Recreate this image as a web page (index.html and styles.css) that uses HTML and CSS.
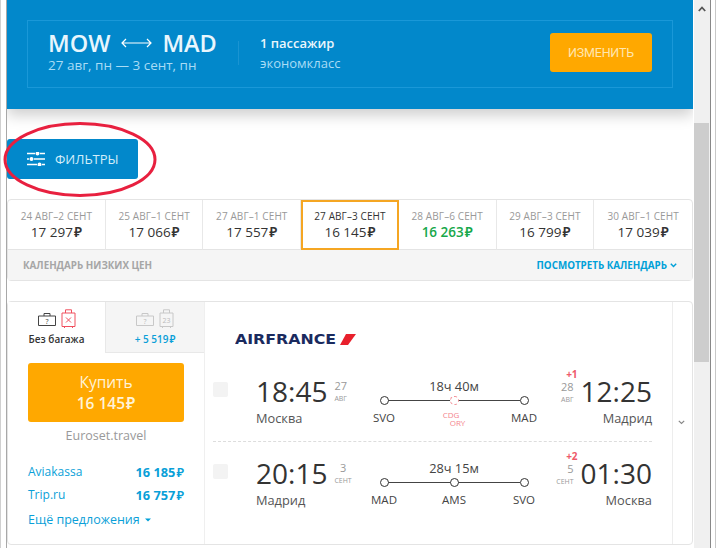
FILE: index.html
```html
<!DOCTYPE html>
<html lang="ru">
<head>
<meta charset="utf-8">
<title>MOW — MAD</title>
<link rel="stylesheet" href="styles.css">
</head>
<body>
<div class="window">
  <main class="page">
    <header class="summary">
      <div class="summary-box">
        <div class="route-info">
          <div class="route-title"><span>MOW</span>
            <svg class="route-arrow" width="31" height="10" viewBox="0 0 31 10"><path d="M1 5h29M5 1 1 5l4 4M26 1l4 4-4 4" fill="none" stroke="#fff" stroke-width="1.200"/></svg>
            <span>MAD</span></div>
          <div class="route-dates">27 авг, пн — 3 сент, пн</div>
        </div>
        <div class="pax-info">
          <div class="pax-count">1 пассажир</div>
          <div class="pax-class">экономкласс</div>
        </div>
        <button class="change-btn">ИЗМЕНИТЬ</button>
      </div>
    </header>

    <div class="filters-row">
      <button class="filters-btn">
        <svg width="18" height="14" viewBox="0 0 18 14"><g stroke="#fff" stroke-width="1.400" fill="#fff"><path d="M0 1.500h8M13 1.500h5M0 7h2M7 7h11M0 12.500h10M15 12.500h3" fill="none"/><circle cx="10.500" cy="1.500" r="1.300"/><circle cx="4.500" cy="7" r="1.300"/><circle cx="12.500" cy="12.500" r="1.300"/></g></svg>
        <span>ФИЛЬТРЫ</span>
      </button>
    </div>

    <section class="calendar">
      <div class="cal-cells">
        <div class="cal-cell"><div class="cal-date">24 АВГ–2 СЕНТ</div><div class="cal-price">17 297<span class="rub">₽</span></div></div>
        <div class="cal-cell"><div class="cal-date">25 АВГ–1 СЕНТ</div><div class="cal-price">17 066<span class="rub">₽</span></div></div>
        <div class="cal-cell"><div class="cal-date">27 АВГ–1 СЕНТ</div><div class="cal-price">17 557<span class="rub">₽</span></div></div>
        <div class="cal-cell selected"><div class="cal-date">27 АВГ–3 СЕНТ</div><div class="cal-price">16 145<span class="rub">₽</span></div></div>
        <div class="cal-cell"><div class="cal-date">28 АВГ–6 СЕНТ</div><div class="cal-price cheap">16 263<span class="rub">₽</span></div></div>
        <div class="cal-cell"><div class="cal-date">29 АВГ–3 СЕНТ</div><div class="cal-price">16 799<span class="rub">₽</span></div></div>
        <div class="cal-cell"><div class="cal-date">30 АВГ–1 СЕНТ</div><div class="cal-price">17 039<span class="rub">₽</span></div></div>
      </div>
      <div class="cal-bar">
        <span class="cal-bar-title">КАЛЕНДАРЬ НИЗКИХ ЦЕН</span>
        <span class="cal-bar-link">ПОСМОТРЕТЬ КАЛЕНДАРЬ
          <svg width="7" height="5" viewBox="0 0 7 5"><path d="M.8.8 3.500 3.500 6.200.8" fill="none" stroke="#00a0d8" stroke-width="1.500"/></svg>
        </span>
      </div>
    </section>

    <section class="ticket">
      <aside class="offer">
        <div class="tabs">
          <div class="tab active">
            <div class="tab-icons">
              <svg width="18" height="13" viewBox="0 0 18 13"><path d="M.5 3h17v9.500H.5zM6 3V.5h6V3" fill="none" stroke="#444"/><text x="9" y="10.500" class="bag-mark dark">?</text></svg>
              <svg width="15" height="20" viewBox="0 0 15 20"><path d="M1 4h13v13.500H1zM4.500 4V.8h6V4M3.500 17.500V19M11.500 17.500V19M5 8.500l5 5M10 8.500l-5 5" fill="none" stroke="#f0505f"/></svg>
            </div>
            <div class="tab-label">Без багажа</div>
          </div>
          <div class="tab">
            <div class="tab-icons">
              <svg width="18" height="13" viewBox="0 0 18 13"><path d="M.5 3h17v9.500H.5zM6 3V.5h6V3" fill="none" stroke="#c8c8c8"/><text x="9" y="10.500" class="bag-mark">?</text></svg>
              <svg width="15" height="20" viewBox="0 0 15 20"><path d="M1 4h13v13.500H1zM4.500 4V.8h6V4M3.500 17.500V19M11.500 17.500V19" fill="none" stroke="#c8c8c8"/><text x="7.500" y="14" class="bag-mark">23</text></svg>
            </div>
            <div class="tab-extra">+ 5 519<span class="rub">₽</span></div>
          </div>
        </div>
        <div class="offer-body">
          <button class="buy-btn"><span>Купить</span><strong>16 145<span class="rub">₽</span></strong></button>
          <div class="seller">Euroset.travel</div>
          <ul class="other-offers">
            <li><span>Aviakassa</span><b>16 185<span class="rub">₽</span></b></li>
            <li><span>Trip.ru</span><b>16 757<span class="rub">₽</span></b></li>
          </ul>
          <div class="more-offers">Ещё предложения
            <svg width="6" height="4" viewBox="0 0 6 4"><path d="M0 .5h6L3 3.500z" fill="#00a0d8"/></svg>
          </div>
        </div>
      </aside>

      <div class="flights">
        <div class="airline">
          <span class="airline-name">AIRFRANCE</span>
          <svg width="16" height="11" viewBox="0 0 16 11"><path d="M6 0h10L8 11H0z" fill="#e8202c"/></svg>
        </div>

        <div class="flight">
          <span class="check"></span>
          <div class="side">
            <div class="time-line"><span class="time">18:45</span><div class="day"><span class="day-num">27</span><span class="day-mon">АВГ</span></div></div>
            <div class="city">Москва</div>
          </div>
          <div class="path">
            <div class="duration">18ч 40м</div>
            <div class="stops">
              <div class="stop"><i class="dot"></i><span class="code">SVO</span></div>
              <div class="stop"><i class="dot red"></i><span class="code transfer">CDG<br><em>ORY</em></span></div>
              <div class="stop"><i class="dot"></i><span class="code">MAD</span></div>
            </div>
          </div>
          <div class="side end">
            <div class="time-line"><div class="day"><span class="plus">+1</span><span class="day-num">28</span><span class="day-mon">АВГ</span></div><span class="time">12:25</span></div>
            <div class="city">Мадрид</div>
          </div>
        </div>

        <div class="flight second">
          <span class="check"></span>
          <div class="side">
            <div class="time-line"><span class="time">20:15</span><div class="day"><span class="day-num">3</span><span class="day-mon">СЕНТ</span></div></div>
            <div class="city">Мадрид</div>
          </div>
          <div class="path">
            <div class="duration">28ч 15м</div>
            <div class="stops">
              <div class="stop"><i class="dot"></i><span class="code">MAD</span></div>
              <div class="stop"><i class="dot"></i><span class="code">AMS</span></div>
              <div class="stop"><i class="dot"></i><span class="code">SVO</span></div>
            </div>
          </div>
          <div class="side end">
            <div class="time-line"><div class="day"><span class="plus">+2</span><span class="day-num">5</span><span class="day-mon">СЕНТ</span></div><span class="time">01:30</span></div>
            <div class="city">Москва</div>
          </div>
        </div>
      </div>

      <div class="expand">
        <svg width="7" height="5" viewBox="0 0 7 5"><path d="M.8.8 3.500 3.500 6.200.8" fill="none" stroke="#888" stroke-width="1.200"/></svg>
      </div>
    </section>

    <svg class="highlight" width="160" height="78" viewBox="0 0 160 78"><ellipse cx="78" cy="38.500" rx="75" ry="36" fill="none" stroke="#e8203f" stroke-width="3"/></svg>
  </main>

  <div class="scrollbar">
    <div class="scroll-up"><svg width="8" height="6" viewBox="0 0 8 6"><path d="M.8 5 4 1.500 7.200 5" fill="none" stroke="#555" stroke-width="1.800"/></svg></div>
    <div class="scroll-thumb"></div>
  </div>
  <div class="frame-edge"></div>
</div>
</body>
</html>
```

FILE: styles.css
```css
* { box-sizing: border-box; }
html, body { margin: 0; height: 100%; overflow: hidden; background: #fff; }
body { font-family: "Open Sans", sans-serif; color: #333; }
button { font-family: inherit; border: 0; padding: 0; }
ul { list-style: none; margin: 0; padding: 0; }
em { font-style: normal; }

.window { display: flex; height: 548px; border-left: 1px solid #d0d0d0; padding-left: 5px; }
.window::before { content: ""; flex: none; width: 1px; background: #a8a8a8; }
.page { position: relative; flex: none; width: 687px; }
.rub { margin-left: 1px; font-family: "Noto Sans", sans-serif; font-weight: 600; }

.summary { height: 109px; margin-right: 1px; padding: 20px 20px 21px; background: #0288cb; box-shadow: 0 6px 14px rgba(0,0,0,.2); clip-path: inset(0 0 -30px 0); }
.summary-box { display: flex; align-items: center; height: 68px; padding: 0 20px; border: 1px solid #1a98d8; }
.route-info { width: 190px; padding-bottom: 4px; color: #fff; }
.route-title { display: flex; align-items: center; gap: 11px; font-size: 23.500px; font-weight: 600; line-height: 26px; color: #e8f6fd; }
.route-title span + svg + span { margin-left: -1px; }
.route-dates { font-size: 13.500px; line-height: 18px; color: #a9dcf5; }
.pax-info { margin-top: -2px; padding-left: 21px; border-left: 1px solid #1a94d2; height: 24px; display: flex; flex-direction: column; justify-content: center; }
.pax-count { font-size: 13px; font-weight: 600; line-height: 20px; color: #eaf6fc; }
.pax-class { font-size: 13px; line-height: 20px; color: #a9dcf5; }
.change-btn { align-self: flex-start; margin: 12px 0 0 auto; width: 102px; height: 39px; border-radius: 3px; background: #ffa800; color: #ffe6b0; font-family: Roboto, sans-serif; font-size: 12.500px; letter-spacing: -.2px; }

.filters-row { padding-top: 30px; height: 90px; }
.filters-btn { display: flex; align-items: center; gap: 10px; width: 131px; height: 40px; padding-left: 20px; background: #0288cb; color: #d4eefa; border-radius: 3px; font-size: 13px; }

.calendar { width: 686px; border: 1px solid #e4e4e4; border-radius: 4px; }
.cal-cells { display: grid; grid-template-columns: repeat(7, 1fr); height: 50px; }
.cal-cell { display: flex; flex-direction: column; align-items: center; justify-content: center; border-right: 1px solid #e8e8e8; border-bottom: 1px solid #e4e4e4; }
.cal-cell:last-child { border-right: 0; }
.cal-date { font-size: 10px; line-height: 14px; color: #999; white-space: nowrap; letter-spacing: .1px; }
.cal-price { font-size: 13.500px; line-height: 18px; color: #333; }
.cal-cell.selected { border: 2px solid #f5a623; }
.cal-cell.selected .cal-date { color: #333; }
.cheap { color: #17a84a; font-weight: 600; }
.cal-bar { display: flex; justify-content: space-between; align-items: center; height: 30px; padding: 0 15px; background: #f5f5f5; }
.cal-bar-title { font-size: 9.800px; font-weight: 700; color: #a6a6a6; }
.cal-bar-link { display: flex; align-items: center; gap: 3px; font-size: 9.800px; font-weight: 700; color: #00a0d8; }

.ticket { display: flex; width: 686px; height: 244px; margin-top: 20px; border: 1px solid #e4e4e4; border-radius: 4px; }
.offer { flex: none; width: 197px; border-right: 1px solid #efefef; }
.tabs { display: flex; height: 51px; }
.tab { flex: 1; display: flex; flex-direction: column; align-items: center; padding-top: 6px; background: #f5f5f5; border-bottom: 1px solid #e8e8e8; }
.tab.active { flex: none; width: 98px; background: #fff; border-right: 1px solid #e8e8e8; border-bottom: 0; }
.tab-icons { display: flex; align-items: center; gap: 5px; height: 22px; }
.bag-mark { font-family: "Open Sans", sans-serif; font-size: 7px; text-anchor: middle; fill: #bbb; }
.bag-mark.dark { fill: #444; }
.tab-label { margin-top: 2px; font-size: 10px; font-weight: 600; line-height: 14px; color: #333; }
.tab-extra { margin-top: 2px; font-size: 10px; font-weight: 600; line-height: 14px; color: #0a9fd8; }
.offer-body { padding: 10px 20px 0; }
.buy-btn { display: flex; flex-direction: column; align-items: center; justify-content: center; width: 156px; height: 59px; background: #ffa800; color: #fff3d8; border-radius: 3px; font-size: 15.500px; line-height: 21px; }
.buy-btn strong { font-weight: 600; }
.seller { margin-top: 5px; text-align: center; font-size: 12.500px; line-height: 18px; color: #999; }
.other-offers { margin-top: 15px; }
.other-offers li { display: flex; justify-content: space-between; height: 23px; align-items: center; font-size: 12px; color: #0a9fd8; }
.other-offers b { font-weight: 700; font-size: 12.800px; }
.more-offers { display: flex; align-items: center; gap: 5px; margin-top: 5px; font-size: 12.500px; line-height: 18px; color: #0a9fd8; }

.flights { flex: none; width: 467px; padding: 29px 20px 0 8px; }
.airline { display: flex; align-items: center; gap: 1px; height: 14px; margin: 1px 0 15px 22px; }
.airline-name { display: block; width: 104px; font-family: "DejaVu Sans", sans-serif; font-size: 13.500px; font-weight: 700; color: #1a2a5e; white-space: nowrap; transform: scaleX(1.17); transform-origin: left center; }
.flight { display: grid; grid-template-columns: 43px 108px 180px 108px; height: 81px; padding-top: 15px; border-bottom: 1px dashed #ddd; }
.flight.second { height: 82px; border-bottom: 0; padding-top: 16px; }
.check { width: 15px; height: 15px; margin-top: 6px; background: #f3f3f3; border-radius: 2px; }
.side { display: flex; flex-direction: column; }
.side.end { align-items: flex-end; }
.time-line { display: flex; gap: 7px; height: 30px; }
.time { font-size: 28px; line-height: 30px; color: #333; }
.day { display: flex; flex-direction: column; align-items: center; margin-top: 3px; }
.side.end .day { margin-top: -7px; align-items: flex-end; }
.plus { margin-right: -4px; font-size: 10px; line-height: 11px; font-weight: 700; color: #ee5a6a; }
.day-num { font-size: 11px; line-height: 13px; color: #999; }
.day-mon { margin-top: 2px; font-size: 7px; line-height: 10px; color: #999; }
.city { margin-top: 3px; font-size: 12.800px; line-height: 18px; color: #555; }
.path { display: flex; flex-direction: column; align-items: center; }
.duration { font-size: 12.800px; line-height: 16px; color: #444; margin-top: 2px; }
.stops { position: relative; display: flex; justify-content: space-between; width: 180px; margin-top: 2px; }
.stops::before { content: ""; position: absolute; left: 24px; right: 24px; top: 4px; border-top: 1px solid #444; }
.stop { position: relative; display: flex; flex-direction: column; align-items: center; width: 40px; }
.dot { width: 9px; height: 9px; border: 1.500px solid #333; border-radius: 50%; background: #fff; }
.dot.red { border: 1px dashed #f28a92; }
.code { margin-top: 6px; font-size: 11.500px; line-height: 14px; color: #444; }
.code.transfer { margin-top: 6px; font-size: 8px; line-height: 8px; color: #f4858e; }
.transfer em { margin-left: 7px; }

.expand { flex: 1; display: flex; align-items: center; justify-content: center; border-left: 1px solid #ededed; padding: 0 2px 2px 0; }

.highlight { position: absolute; left: -5px; top: 121px; }

.scrollbar { flex: none; width: 16px; background: #f0f0f0; }
.scroll-up { display: flex; justify-content: center; align-items: center; height: 18px; }
.scroll-thumb { height: 239px; margin: 105px 1px 0 0; background: #cdcdcd; }
.frame-edge { flex: none; width: 6px; border-left: 1px solid #888; border-right: 1px solid #c8c8c8; }
```
